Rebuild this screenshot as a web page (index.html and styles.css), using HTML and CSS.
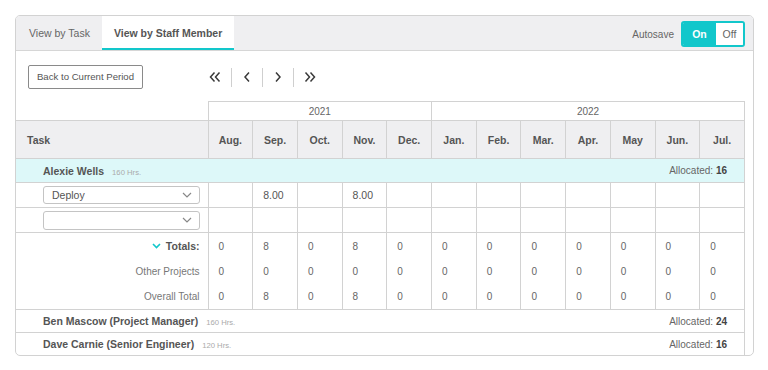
FILE: index.html
```html
<!DOCTYPE html>
<html lang="en">

<head>
    <meta charset="UTF-8">
    <meta name="viewport" content="width=device-width, initial-scale=1.0">
    <title>Staff Allocation</title>
    <link rel="stylesheet" href="styles.css">
</head>

<body>
    <div class="planner">
        <!-- Tabs and autosave switch -->
        <div class="tab-bar">
            <div class="tabs">
                <div class="tab">View by Task</div>
                <div class="tab active">View by Staff Member</div>
            </div>
            <div class="autosave">
                <span class="autosave-label">Autosave</span>
                <div class="toggle">
                    <span class="toggle-on">On</span>
                    <span class="toggle-off">Off</span>
                </div>
            </div>
        </div>

        <!-- Period navigation -->
        <div class="toolbar">
            <button class="btn-period">Back to Current Period</button>
            <div class="pager">
                <svg class="chev-double" width="12" height="12" viewBox="0 0 12 12"><polyline points="5.5,1.5 1.5,6 5.5,10.5" /><polyline points="10.5,1.5 6.5,6 10.5,10.5" /></svg>
                <span class="pager-div"></span>
                <svg class="chev" width="10" height="12" viewBox="0 0 10 12"><polyline points="7,1.5 3,6 7,10.5" /></svg>
                <span class="pager-div"></span>
                <svg class="chev" width="10" height="12" viewBox="0 0 10 12"><polyline points="3,1.5 7,6 3,10.5" /></svg>
                <span class="pager-div"></span>
                <svg class="chev-double" width="12" height="12" viewBox="0 0 12 12"><polyline points="1.5,1.5 5.5,6 1.5,10.5" /><polyline points="6.5,1.5 10.5,6 6.5,10.5" /></svg>
            </div>
        </div>

        <!-- Allocation grid -->
        <div class="grid-wrap">
            <table class="grid">
                <colgroup>
                    <col class="col-task">
                    <col span="12">
                </colgroup>
                <thead>
                    <tr class="year-row">
                        <th class="blank"></th>
                        <th colspan="5">2021</th>
                        <th colspan="7">2022</th>
                    </tr>
                    <tr class="month-row">
                        <th class="task-head">Task</th>
                        <th>Aug.</th>
                        <th>Sep.</th>
                        <th>Oct.</th>
                        <th>Nov.</th>
                        <th>Dec.</th>
                        <th>Jan.</th>
                        <th>Feb.</th>
                        <th>Mar.</th>
                        <th>Apr.</th>
                        <th>May</th>
                        <th>Jun.</th>
                        <th>Jul.</th>
                    </tr>
                </thead>
                <tbody>
                    <tr class="staff-row open">
                        <td colspan="13">
                            <div class="staff-line">
                                <span><span class="staff-name">Alexie Wells</span><span class="hrs">160 Hrs.</span></span>
                                <span class="allocated">Allocated: <b>16</b></span>
                            </div>
                        </td>
                    </tr>
                    <tr class="task-row">
                        <td class="task-cell">
                            <div class="select">Deploy<svg width="10" height="6" viewBox="0 0 10 6"><polyline points="1,1 5,5 9,1" /></svg></div>
                        </td>
                        <td></td>
                        <td>8.00</td>
                        <td></td>
                        <td>8.00</td>
                        <td></td><td></td><td></td><td></td><td></td><td></td><td></td><td></td>
                    </tr>
                    <tr class="task-row">
                        <td class="task-cell">
                            <div class="select tall"><svg width="10" height="6" viewBox="0 0 10 6"><polyline points="1,1 5,5 9,1" /></svg></div>
                        </td>
                        <td></td><td></td><td></td><td></td><td></td><td></td><td></td><td></td><td></td><td></td><td></td><td></td>
                    </tr>
                    <tr class="sum-row first">
                        <td class="sum-label strong">
                            <svg class="teal-chev" width="9" height="6" viewBox="0 0 9 6"><polyline points="1,1 4.5,4.5 8,1" /></svg>Totals:
                        </td>
                        <td>0</td><td>8</td><td>0</td><td>8</td><td>0</td><td>0</td><td>0</td><td>0</td><td>0</td><td>0</td><td>0</td><td>0</td>
                    </tr>
                    <tr class="sum-row">
                        <td class="sum-label">Other Projects</td>
                        <td>0</td><td>0</td><td>0</td><td>0</td><td>0</td><td>0</td><td>0</td><td>0</td><td>0</td><td>0</td><td>0</td><td>0</td>
                    </tr>
                    <tr class="sum-row last">
                        <td class="sum-label">Overall Total</td>
                        <td>0</td><td>8</td><td>0</td><td>8</td><td>0</td><td>0</td><td>0</td><td>0</td><td>0</td><td>0</td><td>0</td><td>0</td>
                    </tr>
                    <tr class="staff-row">
                        <td colspan="13">
                            <div class="staff-line">
                                <span><span class="staff-name">Ben Mascow (Project Manager)</span><span class="hrs">160 Hrs.</span></span>
                                <span class="allocated">Allocated: <b>24</b></span>
                            </div>
                        </td>
                    </tr>
                    <tr class="staff-row end">
                        <td colspan="13">
                            <div class="staff-line">
                                <span><span class="staff-name">Dave Carnie (Senior Engineer)</span><span class="hrs">120 Hrs.</span></span>
                                <span class="allocated">Allocated: <b>16</b></span>
                            </div>
                        </td>
                    </tr>
                </tbody>
            </table>
        </div>
    </div>
</body>

</html>
```

FILE: styles.css
```css
/* Page */
body {
    margin: 0;
    padding: 0;
    font-family: "Liberation Sans", Arial, sans-serif;
    font-size: 10px;
    color: #666;
    background-color: #fff;
}

.planner {
    margin: 15px 14px 0 15px;
    border: 1px solid #d2d2d2;
    border-radius: 5px;
    overflow: hidden;
}

/* Tabs */
.tab-bar {
    display: flex;
    justify-content: space-between;
    align-items: center;
    height: 34px;
    background-color: #efeff1;
    border-bottom: 1px solid #d6d6d6;
}

.tabs {
    display: flex;
    height: 100%;
    padding-left: 1px;
}

.tab {
    display: flex;
    align-items: center;
    padding: 0 12px;
    font-size: 10.5px;
    color: #666;
}

.tab.active {
    background-color: #fff;
    font-weight: bold;
    color: #555;
    box-shadow: inset 0 -2px 0 #12c7cb;
}

.autosave {
    display: flex;
    align-items: center;
    gap: 7px;
    margin-right: 8px;
    margin-top: 2px;
}

.autosave-label {
    font-size: 10px;
    color: #666;
}

.toggle {
    display: flex;
    height: 26px;
    border: 2px solid #12c7cb;
    border-radius: 3px;
    box-sizing: border-box;
    overflow: hidden;
    font-size: 10.5px;
}

.toggle span {
    display: flex;
    align-items: center;
    justify-content: center;
}

.toggle-on {
    width: 33px;
    background-color: #12c7cb;
    color: #fff;
    font-weight: bold;
}

.toggle-off {
    width: 27px;
    background-color: #fff;
    color: #666;
}

/* Period navigation */
.toolbar {
    display: flex;
    align-items: center;
    height: 50px;
    padding-left: 12px;
}

.btn-period {
    height: 24px;
    width: 115px;
    padding: 0;
    font-family: inherit;
    font-size: 9.6px;
    color: #555;
    background-color: #fff;
    border: 1px solid #8a8a8a;
    border-radius: 2px;
    margin-top: 1px;
}

.pager {
    display: flex;
    align-items: center;
    gap: 10px;
    margin-left: 66px;
    margin-top: 2px;
}

.pager svg polyline {
    fill: none;
    stroke: #3a3a3a;
    stroke-width: 1.5;
}

.pager-div {
    width: 1px;
    height: 19px;
    background-color: #cfcfcf;
}

/* Grid */
.grid-wrap {
    padding-right: 8px;
}

.grid {
    width: 729px;
    border-collapse: collapse;
    table-layout: fixed;
}

.col-task {
    width: 192px;
}

.grid th,
.grid td {
    border: 1px solid #d2d2d2;
    padding: 0 10px;
    text-align: left;
    font-weight: normal;
}

.grid tr > :first-child {
    border-left: none;
}

.year-row th {
    height: 18px;
    text-align: center;
    font-size: 10px;
    color: #666;
    padding: 0;
}

.year-row th.blank {
    border-top: none;
    border-left: none;
}

.month-row th {
    height: 37px;
    background-color: #efeff1;
    text-align: center;
    font-weight: bold;
    font-size: 10.5px;
    color: #555;
    padding: 0;
}

.month-row th.task-head {
    text-align: left;
    padding-left: 11px;
}

.staff-row td {
    height: 22px;
    padding: 0 17px 0 27px;
}

.staff-row.open td {
    height: 23px;
    background-color: #ddf8f9;
}

.staff-row.end td {
    height: 22px;
    border-bottom: none;
}

.staff-line {
    display: flex;
    justify-content: space-between;
    align-items: center;
}

.staff-name {
    font-weight: bold;
    font-size: 10.5px;
    color: #555;
}

.hrs {
    margin-left: 8px;
    font-size: 7.7px;
    color: #aaa;
}

.allocated {
    font-size: 10px;
    color: #666;
}

.allocated b {
    color: #444;
}

.task-row td {
    height: 24px;
    font-size: 10.5px;
    color: #555;
}

.task-row td.task-cell {
    padding: 0 8px 0 27px;
}

.select {
    display: flex;
    justify-content: space-between;
    align-items: center;
    height: 18px;
    box-sizing: border-box;
    padding: 0 7px 0 8px;
    border: 1px solid #c4c4c4;
    border-radius: 3px;
    font-size: 10.5px;
    color: #555;
}

.select.tall {
    height: 19px;
    justify-content: flex-end;
}

.select polyline {
    fill: none;
    stroke: #888;
    stroke-width: 1.2;
}

.sum-row td {
    height: 25px;
    border-top: none;
    border-bottom: none;
    font-size: 10px;
    color: #666;
    padding-left: 10px;
}

.sum-row.first td {
    border-top: 1px solid #d2d2d2;
    height: 26px;
}

.sum-row.last td {
    border-bottom: 1px solid #d2d2d2;
}

.sum-row td.sum-label {
    text-align: right;
    padding-right: 8px;
    color: #777;
}

.sum-row td.strong {
    font-weight: bold;
    font-size: 10.5px;
    color: #555;
}

.teal-chev {
    margin-right: 5px;
    vertical-align: 1px;
}

.teal-chev polyline {
    fill: none;
    stroke: #12c7cb;
    stroke-width: 1.6;
}
```
